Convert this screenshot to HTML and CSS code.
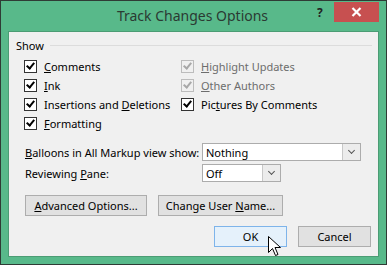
FILE: index.html
```html
<!doctype html>
<html lang="en">
<head>
    <meta charset="UTF-8">
    <title>Track Changes Options</title>
    <link rel="stylesheet" href="styles.css">
</head>
<body>
    <div class="window">
        <div class="titlebar">
            <div class="title">Track Changes Options</div>
            <div class="help">?</div>
            <div class="close">
                <svg width="11" height="10" viewBox="0 0 11 10"><path d="M1.5 1 L9.5 9 M9.5 1 L1.5 9" stroke="#fff" stroke-width="2.2"/></svg>
            </div>
        </div>
        <div class="client">
            <div class="group-head"><span>Show</span><i></i></div>
            <div class="checks">
                <label class="chk"><span class="box on"></span><span><u>C</u>omments</span></label>
                <label class="chk off"><span class="box on"></span><span><u>H</u>ighlight Updates</span></label>
                <label class="chk"><span class="box on"></span><span><u>I</u>nk</span></label>
                <label class="chk off"><span class="box on"></span><span><u>O</u>ther Authors</span></label>
                <label class="chk"><span class="box on"></span><span>Insertions and <u>D</u>eletions</span></label>
                <label class="chk"><span class="box on"></span><span>Pic<u>t</u>ures By Comments</span></label>
                <label class="chk"><span class="box on"></span><span><u>F</u>ormatting</span></label>
            </div>
            <div class="field first">
                <span class="flabel"><u>B</u>alloons in All Markup view show:</span>
                <div class="combo wide"><span>Nothing</span><b class="drop"></b></div>
            </div>
            <div class="field">
                <span class="flabel">Reviewing <u>P</u>ane:</span>
                <div class="combo narrow"><span>Off</span><b class="drop"></b></div>
            </div>
            <div class="btnrow">
                <button class="btn adv"><u>A</u>dvanced Options...</button>
                <button class="btn user">Change User <u>N</u>ame...</button>
            </div>
            <div class="btnrow end">
                <button class="btn ok">OK</button>
                <button class="btn cancel">Cancel</button>
            </div>
            <svg class="cursor" width="13" height="20" viewBox="0 0 13 20">
                <path d="M0.5 0.5 L0.5 16.5 L4.5 12.5 L7.5 19.5 L10 18.5 L7 11.5 L12.5 11.5 Z" fill="#fff" stroke="#000" stroke-width="1" stroke-linejoin="miter"/>
            </svg>
        </div>
    </div>
</body>
</html>
```

FILE: styles.css
```css
body{
    margin:0;
    padding:0;
}
.window{
    width:387px;
    height:265px;
    box-sizing:border-box;
    border:1px solid #2f3b35;
    background:#58b98a;
    display:flex;
    flex-direction:column;
    font-family:"Noto Sans","Open Sans",sans-serif;
    font-size:11px;
    color:#000;
}
.titlebar{
    height:30px;
    position:relative;
}
.title{
    text-align:center;
    font-size:14px;
    line-height:30px;
    color:#2b3a33;
    padding-right:2px;
}
.help{
    position:absolute;
    left:316px;
    top:3px;
    font-size:12px;
    font-weight:bold;
    color:#222;
}
.close{
    position:absolute;
    left:333px;
    top:1px;
    width:45px;
    height:20px;
    background:#c75050;
    display:flex;
    align-items:center;
    justify-content:center;
}
.client{
    flex:1;
    margin:0 7px 7px 7px;
    border:1px solid #4b9c74;
    background:#f0f0f0;
    padding:5px 6px 0 6px;
    position:relative;
}
.group-head{
    display:flex;
    align-items:center;
    height:16px;
    padding-left:1px;
}
.group-head i{
    flex:1;
    height:1px;
    background:#dcdcdc;
    margin-left:6px;
}
.checks{
    display:grid;
    grid-template-columns:157px 1fr;
    grid-auto-rows:19px;
    margin-top:4px;
    padding-left:9px;
}
.chk{
    display:flex;
    align-items:center;
    height:19px;
    white-space:nowrap;
}
.box{
    width:11px;
    height:11px;
    border:1px solid #333;
    background:#fff;
    margin-right:7px;
    flex:none;
    position:relative;
}
.box.on::after{
    content:"";
    position:absolute;
    left:3px;
    top:0;
    width:3px;
    height:6px;
    border:solid #000;
    border-width:0 2px 2px 0;
    transform:rotate(40deg);
}
.chk.off{
    color:#6d6d6d;
}
.chk.off .box{
    border-color:#bcbcbc;
    background:#f0f0f0;
}
.chk.off .box.on::after{
    border-color:#a8a8a8;
}
.field{
    display:flex;
    align-items:center;
    height:18px;
    margin-top:3px;
}
.field.first{
    margin-top:10px;
}
.flabel{
    width:187px;
    padding-left:10px;
    box-sizing:border-box;
    white-space:nowrap;
}
.combo{
    height:18px;
    box-sizing:border-box;
    border:1px solid #acacac;
    background:#fff;
    display:flex;
    align-items:center;
    padding-left:3px;
}
.combo span{
    flex:1;
}
.combo.wide{
    width:159px;
}
.combo.narrow{
    width:79px;
}
.drop{
    width:18px;
    height:16px;
    box-sizing:border-box;
    border-left:1px solid #c8c8c8;
    background:#ececec;
    position:relative;
}
.drop::after{
    content:"";
    position:absolute;
    left:6px;
    top:4px;
    width:4px;
    height:4px;
    border:solid #555;
    border-width:0 1.5px 1.5px 0;
    transform:rotate(45deg);
}
.btnrow{
    display:flex;
    margin-top:13px;
    padding-left:10px;
    gap:11px;
}
.btnrow.end{
    margin-top:10px;
    justify-content:flex-end;
    padding-right:1px;
    padding-left:0;
}
.btn{
    height:21px;
    box-sizing:border-box;
    border:1px solid #adadad;
    background:#e1e1e1;
    font-family:inherit;
    font-size:11px;
    color:#000;
    padding:0;
    margin:0;
}
.btn.adv{
    width:122px;
}
.btn.user{
    width:125px;
}
.btn.ok{
    width:73px;
    background:#e5f1fb;
    border-color:#7eb4ea;
}
.btn.cancel{
    width:73px;
}
.cursor{
    position:absolute;
    left:259px;
    top:204px;
}
```
